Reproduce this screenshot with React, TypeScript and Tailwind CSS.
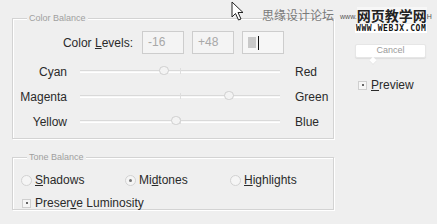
import React from "react"

const font = { fontFamily: '"Liberation Sans", Arial, "Noto Sans CJK SC", sans-serif' }

function Slider({ left, right, pos }: { left: string; right: string; pos: number }) {
    return (
        <div className="flex flex-row items-center h-[25px]">
            <div className="w-[54px] text-right text-[12px] text-[#2a2a2a]">{left}</div>
            <div className="relative ml-[13px] w-[200px] h-[3px] border-t border-[#d9d9d9] border-b border-b-white bg-[#f7f7f7]">
                <div className="absolute left-[100px] top-[-3px] w-[1px] h-[6px] bg-[#dedede]"></div>
                <div
                    className="absolute top-[-5px] w-[10px] h-[9px] rounded-full border border-[#cfcfcf] bg-[#f3f3f3]"
                    style={{ left: pos - 5 }}
                ></div>
            </div>
            <div className="ml-[15px] text-[12px] text-[#2a2a2a]">{right}</div>
        </div>
    )
}

function Radio({ label, checked }: { label: [string, string, string]; checked?: boolean }) {
    return (
        <div className="flex flex-row items-center gap-[3px]">
            <div className="w-[11px] h-[11px] rounded-full border border-[#d2d2d2] bg-[#f5f5f5] flex items-center justify-center">
                {checked && <div className="w-[3px] h-[3px] rounded-full bg-[#777]"></div>}
            </div>
            <span className="text-[12px] text-[#2a2a2a]">
                {label[0]}<span className="underline">{label[1]}</span>{label[2]}
            </span>
        </div>
    )
}

function Check({ children }: { children: React.ReactNode }) {
    return (
        <div className="flex flex-row items-center gap-[4px]">
            <div className="w-[9px] h-[9px] border border-[#cfcfcf] bg-[#f6f6f6] flex items-center justify-center">
                <div className="w-[2px] h-[2px] bg-[#666]"></div>
            </div>
            <span className="text-[12px] text-[#2a2a2a]">{children}</span>
        </div>
    )
}

export default function App() {
    return (
        <div className="relative w-[437px] h-[224px] bg-[#efefef] overflow-hidden" style={font}>
            <div className="flex flex-row">
                {/* left column */}
                <div className="flex flex-col pl-[12px] pt-[18px]">
                    <div className="relative w-[322px] h-[121px] border border-[#d3d3d3] shadow-[inset_1px_1px_0_#fff,1px_1px_0_#fff]">
                        <span className="absolute left-[14px] top-[-7px] px-[2px] bg-[#efefef] text-[9px] text-[#a0a0a0] leading-[12px]">Color Balance</span>
                        <div className="flex flex-row items-center pt-[12px]">
                            <div className="w-[120px] text-right text-[12px] text-[#2a2a2a]">
                                Color <span className="underline">L</span>evels:
                            </div>
                            <div className="flex flex-row gap-[8px] ml-[9px]">
                                <div className="w-[42px] h-[23px] border border-[#cdcdcd] bg-[#f4f4f4] text-[12px] text-[#a8a8a8] pl-[5px] leading-[21px]">-16</div>
                                <div className="w-[42px] h-[23px] border border-[#cdcdcd] bg-[#f4f4f4] text-[12px] text-[#a8a8a8] pl-[5px] leading-[21px]">+48</div>
                                <div className="w-[42px] h-[23px] border border-[#cdcdcd] bg-[#f6f6f6] flex flex-row items-center pl-[5px]">
                                    <div className="w-[8px] h-[11px] bg-[#c9c9c9]"></div>
                                    <div className="w-[1px] h-[14px] bg-[#111] ml-[2px]"></div>
                                </div>
                            </div>
                        </div>
                        <div className="flex flex-col pt-[5px]">
                            <Slider left="Cyan" right="Red" pos={84} />
                            <Slider left="Magenta" right="Green" pos={149} />
                            <Slider left="Yellow" right="Blue" pos={96} />
                        </div>
                    </div>
                    <div className="relative mt-[18px] w-[322px] h-[53px] border border-[#d3d3d3] shadow-[inset_1px_1px_0_#fff,1px_1px_0_#fff]">
                        <span className="absolute left-[14px] top-[-7px] px-[2px] bg-[#efefef] text-[9px] text-[#a0a0a0] leading-[12px]">Tone Balance</span>
                        <div className="flex flex-col pl-[8px] pt-[13px] gap-[5px]">
                            <div className="flex flex-row">
                                <div className="w-[104px]"><Radio label={["", "S", "hadows"]} /></div>
                                <div className="w-[105px]"><Radio label={["Mi", "d", "tones"]} checked /></div>
                                <Radio label={["", "H", "ighlights"]} />
                            </div>
                            <div className="pl-[1px]">
                                <Check>Preser<span className="underline">v</span>e Luminosity</Check>
                            </div>
                        </div>
                    </div>
                </div>

                {/* right column */}
                <div className="flex flex-col pl-[21px] pt-[44px]">
                    <div className="relative w-[71px] h-[14px] bg-white rounded-[2px] border border-[#e6e6e6] shadow-[0_1px_1px_#ddd] flex items-center justify-center">
                        <span className="text-[9px] text-[#9a9a9a]">Cancel</span>
                        <div className="absolute left-[14px] top-[13px] w-[6px] h-[6px] bg-white rotate-45 border-r border-b border-[#e6e6e6]"></div>
                    </div>
                    <div className="mt-[18px] pl-[3px]">
                        <Check><span className="underline">P</span>review</Check>
                    </div>
                </div>
            </div>

            {/* watermark */}
            <div className="absolute left-[262px] top-[7px] flex flex-row items-end">
                <span className="text-[12px] text-[#7a7a7a] leading-[16px]" style={{ fontFamily: '"Noto Sans CJK SC", sans-serif' }}>思缘设计论坛</span>
                <span className="ml-[6px] text-[7px] text-[#555] leading-[12px]">www.</span>
                <span className="text-[14px] font-bold text-[#222] leading-[16px] bg-[#f7f7f7]" style={{ fontFamily: '"Noto Sans CJK SC", sans-serif' }}>网页教学网</span>
                <span className="text-[7px] text-[#555] leading-[12px]">H</span>
            </div>
            <div className="absolute left-[355px] top-[24px] bg-white px-[1px] text-[8px] font-bold tracking-[0.6px] text-[#111] leading-[9px]" style={{ fontFamily: '"DejaVu Sans Mono", monospace' }}>
                WWW.WEBJX.COM
            </div>

            {/* mouse cursor */}
            <svg className="absolute left-[231px] top-[1px]" width="16" height="21" viewBox="0 0 16 21">
                <path d="M1 1 L1 16 L4.5 12.5 L7.5 19 L10 18 L7 11.5 L12 11.5 Z" fill="#fff" stroke="#222" strokeWidth="1" strokeLinejoin="round" />
            </svg>
        </div>
    )
}
